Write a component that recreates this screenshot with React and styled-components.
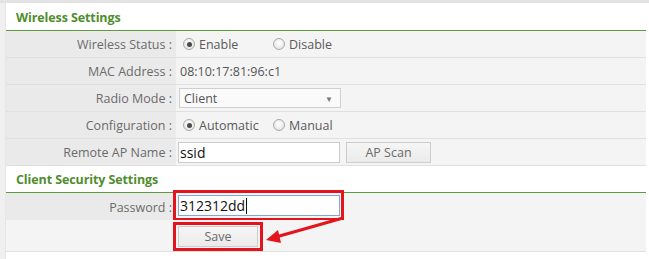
import React from "react";
import styled, { createGlobalStyle } from "styled-components";

const Global = createGlobalStyle`
  html, body {
    margin: 0;
    padding: 0;
    background: #ffffff;
    font-family: "Open Sans", "Noto Sans", Arial, sans-serif;
  }
`;

const Page = styled.div`
  position: relative;
  width: 649px;
  height: 259px;
  border-top: 3px solid #e3e3e3;
  box-sizing: border-box;
  display: flex;
  background: #ffffff;
`;

const Gutter = styled.div`
  width: 5px;
  background: #f0f0f0;
  border-right: 1px solid #e6e6e6;
`;

const Panel = styled.div`
  width: 640px;
  display: flex;
  flex-direction: column;
`;

const Heading = styled.div`
  height: ${(p) => p.h}px;
  display: flex;
  align-items: center;
  padding-left: 10px;
  padding-top: 1px;
  box-sizing: border-box;
  border-bottom: 1px solid #5e9b3f;
  color: #4f8d2e;
  font-weight: 700;
  font-size: 12.5px;
  letter-spacing: -0.1px;
`;

const Row = styled.div`
  display: grid;
  grid-template-columns: 170px 1fr;
  height: ${(p) => p.h || 26}px;
  border-bottom: 1px solid #e0e0e0;
`;

const Label = styled.div`
  background: ${(p) => (p.light ? "#f4f4f4" : "#eaeaea")};
  color: #6b6b6b;
  font-size: 12.5px;
  text-align: right;
  padding-right: 4px;
  display: flex;
  align-items: center;
  justify-content: flex-end;
`;

const Value = styled.div`
  background: #f4f4f4;
  display: flex;
  align-items: center;
  padding-left: ${(p) => p.pl ?? 4}px;
  color: #555;
  font-size: 12.5px;
`;

const RadioItem = styled.label`
  display: inline-flex;
  align-items: center;
  gap: 4px;
  width: ${(p) => p.w}px;
  color: #5a5a5a;
`;

const Dot = styled.span`
  width: 12px;
  height: 12px;
  border-radius: 50%;
  box-sizing: border-box;
  border: 1px solid #a9a9a9;
  background: radial-gradient(circle at 50% 40%, #ffffff 0%, #dedede 100%);
  position: relative;
  &::after {
    content: "";
    display: ${(p) => (p.on ? "block" : "none")};
    position: absolute;
    left: 2.5px;
    top: 2.5px;
    width: 5px;
    height: 5px;
    border-radius: 50%;
    background: #4a4a4a;
  }
`;

const Select = styled.div`
  width: 162px;
  height: 20px;
  box-sizing: border-box;
  border: 1px solid #cfcfcf;
  background: #fafafa;
  display: flex;
  align-items: center;
  justify-content: space-between;
  padding: 0 7px 0 4px;
  color: #555;
  font-size: 12.5px;
  margin-left: -1px;
  span {
    font-size: 8px;
    color: #777;
  }
`;

const Input = styled.div`
  width: 162px;
  height: 21px;
  box-sizing: border-box;
  border: 1px solid ${(p) => (p.focus ? "#7ea6d8" : "#cccccc")};
  background: #ffffff;
  display: flex;
  align-items: center;
  padding-left: 1px;
  color: #111;
  font-size: 14px;
  margin-left: ${(p) => p.ml || 0}px;
`;

const Caret = styled.span`
  width: 1px;
  height: 16px;
  background: #111;
  margin-left: 1px;
`;

const Button = styled.div`
  width: ${(p) => p.w}px;
  height: 21px;
  box-sizing: border-box;
  border: 1px solid #cdcdcd;
  background: linear-gradient(#f5f5f5, #ebebeb);
  color: #6a6a6a;
  font-size: 12.5px;
  display: flex;
  align-items: center;
  justify-content: center;
  margin-left: ${(p) => p.ml || 0}px;
`;

const Highlight = styled.div`
  border: 3px solid #e3141c;
  padding: ${(p) => p.pad};
  margin-left: -3px;
  display: flex;
  align-items: center;
  align-self: flex-start;
  margin-top: ${(p) => p.mt || 0}px;
`;

const Arrow = styled.svg`
  position: absolute;
  left: 0;
  top: -3px;
  pointer-events: none;
`;

export default function App() {
  return (
    <>
      <Global />
      <Page>
        <Gutter />
        <Panel>
          <Heading h={28}>Wireless Settings</Heading>
          <Row>
            <Label>Wireless Status :</Label>
            <Value pl={7}>
              <RadioItem w={90}>
                <Dot on />
                Enable
              </RadioItem>
              <RadioItem w={80}>
                <Dot />
                Disable
              </RadioItem>
            </Value>
          </Row>
          <Row>
            <Label>MAC Address :</Label>
            <Value>08:10:17:81:96:c1</Value>
          </Row>
          <Row>
            <Label>Radio Mode :</Label>
            <Value>
              <Select>
                Client<span>▼</span>
              </Select>
            </Value>
          </Row>
          <Row>
            <Label>Configuration :</Label>
            <Value pl={7}>
              <RadioItem w={90}>
                <Dot on />
                Automatic
              </RadioItem>
              <RadioItem w={80}>
                <Dot />
                Manual
              </RadioItem>
            </Value>
          </Row>
          <Row>
            <Label>Remote AP Name :</Label>
            <Value pl={2}>
              <Input>ssid</Input>
              <Button w={85} ml={6}>
                AP Scan
              </Button>
            </Value>
          </Row>
          <Heading h={27}>Client Security Settings</Heading>
          <Row>
            <Label>Password :</Label>
            <Value pl={0}>
              <Highlight pad="2px 1px 2px 2px" mt={-3}>
                <Input focus>
                  312312dd
                  <Caret />
                </Input>
              </Highlight>
            </Value>
          </Row>
          <Row h={31}>
            <Label light />
            <Value pl={0}>
              <Highlight pad="1px 2px 1px 2px" mt={2}>
                <Button w={80}>Save</Button>
              </Highlight>
            </Value>
          </Row>
        </Panel>
        <Arrow width="649" height="262" viewBox="0 0 649 262">
          <line x1="343" y1="218" x2="276" y2="237" stroke="#e3141c" strokeWidth="3" />
          <polygon points="266,240 278,230 281,243" fill="#e3141c" />
        </Arrow>
      </Page>
    </>
  );
}
